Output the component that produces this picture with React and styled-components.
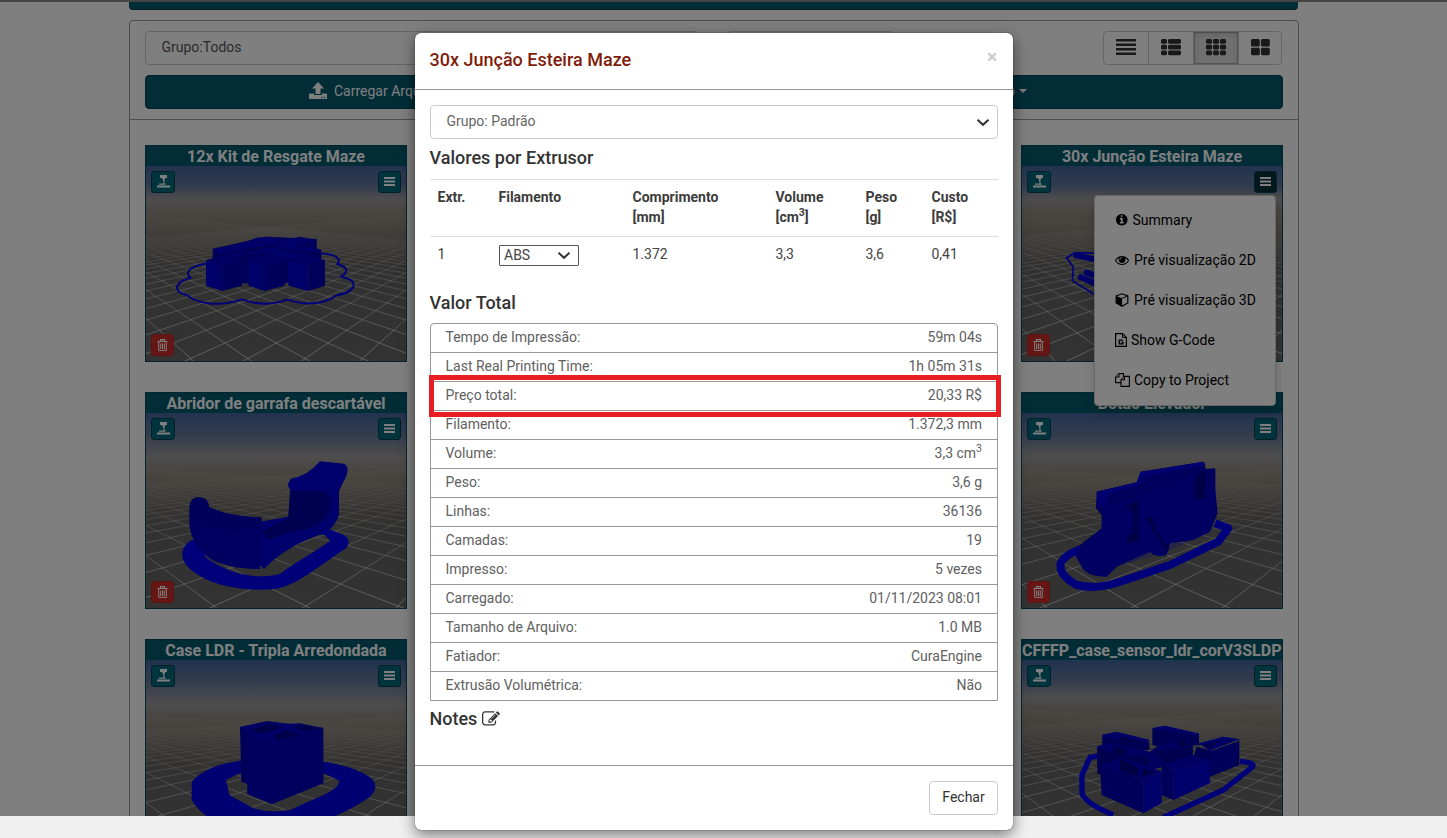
import React from "react";
import styled, { createGlobalStyle, css } from "styled-components";

const Global = createGlobalStyle`
  * { box-sizing: border-box; }
  body { margin: 0; background: #f0f0f0; font: 14px/20px Roboto, "Liberation Sans", sans-serif; color: #333; overflow: hidden; }
  svg { display: block; }
`;

const Screen = styled.div`position: relative; width: 1447px; height: 838px; overflow: hidden;`;
const Page = styled.div`
  height: 816px; overflow: hidden; background: #fff; border-top: 2px solid #888;
`;
const Container = styled.div`width: 1170px; margin: 0 auto 0 129px;`;
const TopBar = styled.div`
  height: 8px; width: 1169px; background: #045a6f; border-radius: 0 0 4px 4px; border-bottom: 1px solid #023c4b;
`;
const Panel = styled.div`
  margin-top: 10px; height: 900px; border: 1px solid #999; border-radius: 4px; background: #fff;
`;
const PanelHead = styled.div`padding: 10px 15px; height: 99px; border-bottom: 1px solid #999;`;
const Filters = styled.div`display: flex; height: 34px;`;
const Field = styled.div`
  width: ${p => p.$w}px; height: 34px; border: 1px solid #ccc; border-radius: 4px; margin-right: ${p => p.$gap}px;
  padding: 5px 15.500px; color: #555; font-size: 14px;
`;
const ViewGroup = styled.div`
  display: flex; width: 179px; border: 1px solid #ccc; border-radius: 4px; overflow: hidden;
`;
const ViewButton = styled.div`
  flex: 0 0 45px; display: flex; align-items: center; justify-content: center; padding-bottom: 1px;
  border-right: 1px solid #ccc;
  &:last-child { flex: 1; border-right: 0; }
  ${p => p.$active && css`background: #e0e0e0; box-shadow: inset 0 3px 5px rgba(0,0,0,.125), inset 0 0 0 1px #adadad;`}
`;
const Toolbar = styled.div`
  display: flex; align-items: center; justify-content: space-between; margin-top: 10px; height: 34px;
  padding: 0 255px 0 163px; background: #045a6f; border: 1px solid #034a5c; border-radius: 4px;
  color: #fff; width: 1138px;
`;
const ToolItem = styled.span`display: flex; align-items: center; gap: 7px; padding-bottom: 2px;`;
const Caret = styled.i`
  border: 4px solid transparent; border-top-color: #fff; border-bottom: 0; margin-left: -3px;
`;
const Cards = styled.div`
  display: grid; grid-template-columns: repeat(4, 262px); gap: 30px; padding: 25px 15px;
`;
const Card = styled.div`
  position: relative; grid-column: ${p => p.$col}; height: 217px; border: 1px solid #034a5c; overflow: hidden;
`;
const CardTitle = styled.div`
  height: 20px; line-height: 22px; background: #045a6f; color: #fff; font-size: 16px; font-weight: 700;
  white-space: nowrap; display: flex; justify-content: ${p => (p.$long ? "flex-start" : "center")};
`;
const Mini = styled.div`
  position: absolute; ${p => p.$side}: 5px; ${p => (p.$bottom ? "bottom: 5px" : "top: 25px")};
  width: ${p => p.$w || 23}px; height: 22px; border-radius: 3px; border: 1px solid ${p => p.$edge || "#034350"};
  background: ${p => p.$bg || "#04687c"}; display: flex; align-items: center; justify-content: center; padding-bottom: 1px;
`;
const Menu = styled.div`
  position: absolute; left: 1094px; top: 195px; width: 182px; height: 211px; padding: 4px 0 6px; background: #fff;
  border: 1px solid #ccc; border-radius: 4px; box-shadow: 0 6px 12px rgba(0,0,0,.18);
`;
const MenuItem = styled.div`
  height: 40px; display: flex; align-items: center; gap: ${p => p.$gap || 4}px; padding-left: 20px; color: #000;
`;
const Backdrop = styled.div`position: absolute; inset: 0 0 22px 0; background: rgba(0,0,0,.5);`;

const Modal = styled.div`
  position: absolute; left: 415px; top: 33px; width: 598px; height: 797px; background: #fff; border-radius: 6px;
  box-shadow: 0 5px 15px rgba(0,0,0,.5), 0 0 1px #000; display: flex; flex-direction: column;
`;
const ModalHead = styled.div`
  height: 57px; padding: 15px 16px 15px 14.500px; border-bottom: 1px solid #999; display: flex; justify-content: space-between;
`;
const Title = styled.div`font-size: 18px; line-height: 24px; font-weight: 500; color: #801c0a;`;
const Close = styled.span`color: #ccc; font-size: 19px; line-height: 18px; font-weight: 700;`;
const Body = styled.div`padding: 15px; height: 675px;`;
const Select = styled.div`
  display: flex; align-items: center; justify-content: space-between; height: 34px; border: 1px solid #ccc;
  border-radius: 4px; padding: 0 7px 2px 15.500px; color: #666;
  svg { margin-top: 3px; }
`;
const Heading = styled.div`
  display: flex; align-items: center; gap: 5px; height: 20px; margin: ${p => p.$m}; font-size: 18px;
  font-weight: 500; color: #333; text-indent: -0.5px;
`;
const Table = styled.div`
  display: grid; grid-template-columns: 61px 134px 143px 90px 66px 74px; border-top: 1px solid #ddd;
`;
const Th = styled.div`height: 57px; padding: 7px 7.500px; font-weight: 700; border-bottom: 1px solid #ddd; font-size: 14px; color: #3c3c3c; sup { line-height: 0; font-size: 75%; }`;
const Td = styled.div`height: 46px; padding: ${p => (p.$control ? "8px" : "7px 7.500px")}; color: #444;`;
const SmallSelect = styled.div`
  display: flex; align-items: center; justify-content: space-between; width: 80px; height: 21px; line-height: 18px;
  border: 1px solid #555; border-radius: 1px; padding: 0 7px 0 4px; color: #444;
  span { height: 20px; }
`;
const List = styled.div`border: 1px solid #999; border-radius: 4px 4px 0 0;`;
const Row = styled.div`
  display: flex; justify-content: space-between; height: 29px; padding: 3px 15px 3px 14.500px; color: #606060;
  border-bottom: 1px solid #999;
  &:last-child { height: 28px; border-bottom: 0; }
  sup { line-height: 0; font-size: 75%; }
`;
const Footer = styled.div`
  border-top: 1px solid #999; padding: 15px; display: flex; justify-content: flex-end;
`;
const Button = styled.div`
  width: 69px; height: 34px; border: 1px solid #ccc; border-radius: 4px; line-height: 31px; text-align: center; color: #333;
`;
const Highlight = styled.div`
  position: absolute; left: 429px; top: 375px; width: 572px; height: 42px; border: 5px solid #e81e25;
`;

const Chevron = ({ w = 14, c = "#333" }) => (
  <svg width={w} height="9" viewBox="0 0 14 9"><path d="M1.5 1.7 7 6.8l5.5-5.1" fill="none" stroke={c} strokeWidth="2" /></svg>
);
const Bars = () => (
  <svg width="11" height="9" fill="#fff"><path d="M0 0h11v2H0zM0 3.500h11v2H0zM0 7h11v2H0z" /></svg>
);
const Printer = () => (
  <svg width="14" height="13" viewBox="0 0 14 13" fill="#fff">
    <path d="M4 0h7v3H9.500L8.500 4.500v2h-1.500v-2L5.500 3H4z" />
    <path d="M7.500 6.500h1v2.500h-1zM3 8.500h6.500v1.200H3zM1 10.500h13v2H1z" />
  </svg>
);
const Trash = () => (
  <svg width="11" height="12" viewBox="0 0 11 12" fill="none" stroke="#fff">
    <path d="M.5 2.500h10M3.500 2.500V.6h4v1.900" strokeWidth="1.200" /><path d="M1.700 3v8.400h7.600V3M3.700 4.500v5.500M5.500 4.500v5.500M7.300 4.500v5.500" />
  </svg>
);
const Upload = () => (
  <svg width="18" height="18" viewBox="0 0 18 18">
    <path fill="#fff" d="M9 0l6 6.500h-3.500V12h-5V6.500H3zM.5 11.500H5V13h8v-1.500h4.500l.5 1V17H0v-4.500z" /><path fill="#045a6f" d="M12.500 14.800h1.200V16h-1.200zM15 14.800h1.200V16H15z" />
  </svg>
);
const FaGlyph = ({ d, w = 14 }) => <svg width={w} height={w} viewBox="0 0 1792 1792" fill="currentColor"><path d={d} /></svg>;
const INFO = "M1152 1376v-160q0-14-9-23t-23-9h-96v-512q0-14-9-23t-23-9h-320q-14 0-23 9t-9 23v160q0 14 9 23t23 9h96v320h-96q-14 0-23 9t-9 23v160q0 14 9 23t23 9h448q14 0 23-9t9-23zm-128-896v-160q0-14-9-23t-23-9h-192q-14 0-23 9t-9 23v160q0 14 9 23t23 9h192q14 0 23-9t9-23zm640 416q0 209-103 385.5t-279.500 279.500-385.500 103-385.500-103-279.500-279.500-103-385.500 103-385.500 279.500-279.500 385.500-103 385.500 103 279.500 279.500 103 385.500z";
const EYE = "M1664 960q-152-236-381-353 61 104 61 225 0 185-131.500 316.500t-316.500 131.500-316.500-131.500-131.500-316.500q0-121 61-225-229 117-381 353 133 205 333.500 326.500t434.500 121.500 434.500-121.500 333.500-326.500zm-720-384q0-20-14-34t-34-14q-125 0-214.500 89.500t-89.500 214.500q0 20 14 34t34 14 34-14 14-34q0-86 61-147t147-61q20 0 34-14t14-34zm848 384q0 34-20 69-140 230-376.500 368.500t-499.500 138.500-499.500-139-376.500-368q-20-35-20-69t20-69q140-229 376.500-368t499.500-139 499.500 139 376.500 368q20 35 20 69z";
const EDIT = "M888 1184l116-116-152-152-116 116v56h96v96h56zm440-720q-16-16-33 1l-350 350q-17 17-1 33t33-1l350-350q17-17 1-33zm80 594v190q0 119-84.500 203.500t-203.500 84.500h-832q-119 0-203.500-84.500t-84.500-203.500v-832q0-119 84.500-203.500t203.500-84.500h832q63 0 117 25 15 7 18 23 3 17-9 29l-49 49q-14 14-32 8-23-6-45-6h-832q-66 0-113 47t-47 113v832q0 66 47 113t113 47h832q66 0 113-47t47-113v-126q0-13 9-22l64-64q15-15 35-7t20 29zm-96-738l288 288-672 672h-288v-288zm444 132l-92 92-288-288 92-92q28-28 68-28t68 28l152 152q28 28 28 68t-28 68z";
const Cube = () => (
  <svg width="14" height="14" viewBox="0 0 14 14"><path d="M7 .8l5.800 2.200v7L7 13.200 1.200 10V3z" fill="none" stroke="#000" strokeWidth="1.200" /><path d="M1.200 3L7 5.300v7.900L1.200 10z" fill="#000" /><path d="M7 5.300L12.800 3" stroke="#000" /></svg>
);
const GFile = () => (
  <svg width="12" height="14" viewBox="0 0 12 14" fill="none" stroke="#000"><path d="M.6.6h6.900l3.900 3.800v9H.6z" strokeWidth="1.200" /><path d="M7.500.6v3.800h3.900" /><path d="M8 7.200H4.200v3.600H8V9.200H6.300" strokeWidth="1.300" /></svg>
);
const Copy = () => (
  <svg width="15" height="14" viewBox="0 0 15 14" fill="#fff" stroke="#000" strokeWidth="1.100"><path d="M4 .6h4.500v9H.6V4z" /><path d="M4 .6V4H.6" /><path d="M9.400 3.400h5v10H6V6.800z" /><path d="M9.400 3.400v3.400H6" /></svg>
);

const cell = (x, y, w, h) => `M${x + 1} ${y}h${w - 2}l1 1v${h - 2}l-1 1h${2 - w}l-1-1v${2 - h}z`;
const VIEW = [
  "M0 0h20v2.500H0zM0 4.500h20v2.500H0zM0 9h20v2.500H0zM0 13.500h20v2.500H0z",
  [0, 5.700, 11.400].map(y => cell(0, y, 6, 4.800) + cell(7, y, 13, 4.800)).join(""),
  [0, 7, 14].flatMap(x => [0, 5.700, 11.400].map(y => cell(x, y, 6, 4.800))).join(""),
  [0, 10].flatMap(x => [0, 8.700].map(y => cell(x, y, 8.800, 7.500))).join(""),
];

/* Perspective floor: two families of lines converging on the horizon. */
function Floor({ id, horizon, base, x0, step }) {
  const d = [];
  for (let k = -24; k <= 24; k++) {
    const x = x0 + k * step;
    [-128, 388].forEach(vx => {
      const t = (200 - horizon) / (base - horizon);
      d.push(`M${vx} ${horizon}L${(vx + (x - vx) * t).toFixed(1)} 200`);
    });
  }
  return (
    <>
      <defs>
        <linearGradient id={`sky${id}`} x2="0" y2="1">
          <stop offset="0" stopColor="#44669f" /><stop offset=".1" stopColor="#62769c" />
          <stop offset={horizon / 195 - 0.02} stopColor="#9c9a9b" /><stop offset={horizon / 195 + 0.06} stopColor="#90887e" />
          <stop offset={horizon / 195 + 0.25} stopColor="#6d6863" /><stop offset={horizon / 195 + 0.33} stopColor="#636363" /><stop offset="1" stopColor="#666" />
        </linearGradient>
        <linearGradient id={`fade${id}`} gradientUnits="userSpaceOnUse" x1="0" x2="0" y1={horizon + 5} y2="195">
          <stop offset="0" stopColor="#fff" stopOpacity="0" /><stop offset=".2" stopColor="#fff" stopOpacity=".12" />
          <stop offset=".45" stopColor="#fff" stopOpacity=".4" /><stop offset="1" stopColor="#fff" stopOpacity=".75" />
        </linearGradient>
      </defs>
      <rect width="260" height="195" fill={`url(#sky${id})`} />
      <path d={d.join("")} stroke={`url(#fade${id})`} strokeWidth=".8" fill="none" />
    </>
  );
}
const A = "#0000f4", B = "#0000b4", C = "#0000d2";
const Block = ({ x, y, l, r, h, u = 16 }) => (
  <>
    <path fill={C} d={`M${x - l} ${y}L${x} ${y + u}V${y + u + h}L${x - l} ${y + h}z`} />
    <path fill={B} d={`M${x} ${y + u}L${x + r} ${y}V${y + h}L${x} ${y + u + h}z`} />
    <path fill="#0000c4" d={`M${x - l} ${y}L${x + (r - l) / 2} ${y - u}L${x + r} ${y}L${x} ${y + u}z`} />
  </>
);
const Hatch = ({ id, d, a = -25 }) => (
  <>
    <pattern id={id} width="9" height="8" patternUnits="userSpaceOnUse" patternTransform={`rotate(${a})`}>
      <path d="M0 2h9" stroke="#0000ee" strokeWidth="3" />
    </pattern>
    <path d={d} fill={`url(#${id})`} opacity=".6" />
  </>
);
const KitModel = () => (
  <g transform="scale(.33333) translate(-18 -78)">
    <path fill="none" stroke={A} strokeWidth="6" d="M230 366C150 375 130 395 152 413C105 425 95 455 140 465C180 495 240 500 305 478C350 494 400 495 442 478C500 500 560 490 590 466C650 455 660 420 604 410C640 385 600 375 592 372C610 350 570 340 530 340" />
    <path fill={B} d="M218 326L380 290L530 297V325L544 330V370H500L440 430L300 430L218 370z" />
    <path fill={C} d="M218 330L300 312L350 293L380 290L430 302L480 290L530 300L460 318L540 328L440 362L370 335L260 356z" />
    <path stroke="#000088" strokeWidth="3" fill="none" d="M218 350L330 328L430 310M315 338L380 318L442 330L540 342M316 345V430M436 350V430" />
    <Block x={246} y={361} l={48} r={60} h={76} /><Block x={375} y={361} l={50} r={58} h={76} /><Block x={505} y={361} l={60} r={50} h={76} />
  </g>
);
const BeltModel = () => (
  <g transform="scale(.33333) translate(-36 -78)" fill="none" stroke={A} strokeWidth="5">
    <path d="M270 340L195 338L170 353L190 382L187 422L260 468" />
    <path d="M198 346L260 359M230 398L265 410M212 412L260 432" strokeWidth="18" strokeLinecap="round" stroke={C} />
  </g>
);
const OpenerModel = () => (
  <g transform="scale(.33333) translate(-18 -84)">
    <path fill={A} fillRule="evenodd" d="M150 468C120 490 115 525 160 560C220 605 320 620 405 612C470 600 520 555 620 488Q635 465 612 450L560 430L330 410zM186 495L200 520Q270 568 345 574Q390 575 420 566C470 530 510 510 570 468L555 450L360 420L186 480z" />
    <path fill="#0000d8" d="M360 410L445 395L452 315Q435 300 455 280Q500 275 540 229L612 236Q630 245 618 275L597 318V390Q580 440 530 452Q430 490 372 552L360 540z" />
    <path fill="#0000a2" d="M450 316L550 318Q585 330 565 385Q540 435 450 440L385 465L365 440L445 400z" />
    <path fill="#0000b5" d="M148 365Q150 335 180 336Q205 338 208 366Q270 395 365 397L360 552Q230 550 185 500Q155 470 148 420z" />
    <Hatch id="openerHatch" d="M150 400Q250 460 362 420L360 552Q230 550 185 500Q155 470 150 400z" a={10} />
  </g>
);
const ButtonModel = () => (
  <g transform="scale(.33333) translate(-36 -84)">
    <path fill="none" stroke={A} strokeWidth="24" strokeLinejoin="round" d="M240 485Q170 500 152 535Q145 570 200 600Q260 615 330 590L480 540L625 470L655 430L615 415" />
    <path fill="#0000b8" d="M260 320L380 292L392 260L580 230L588 252L616 250V315L623 385L600 440L550 465L480 475L470 510Q440 520 420 500L320 545L290 575Q230 575 215 545L198 515L210 480L275 430V390L258 370z" />
    <Hatch id="buttonHatch" d="M275 370L560 270L620 315L600 440L470 500L320 545L290 575Q230 575 200 515L275 430z" />
    <path fill="#0000dc" d="M260 320L380 292L392 260L580 230L588 240L400 275L390 300L300 325L285 365L262 360z" />
    <path fill="#00008e" d="M345 365L385 345V470L350 475L355 450L370 440V380zM405 395L430 400L440 440L478 490L470 500L425 430zM555 280L585 255V340L555 345z" />
  </g>
);
const CaseModel = () => (
  <g transform="scale(.33333) translate(-18 -90)">
    <path fill="#0000e6" fillRule="evenodd" d="M300 392Q200 405 155 455V510Q180 550 220 570H560Q650 530 690 500Q730 460 670 430Q620 405 550 395zM258 450L300 430H550L595 450Q605 470 550 495L450 540Q390 550 340 535L268 495z" />
    <path fill="#0000b0" d="M300 291L382 274L550 293V460L395 523L322 492V462L304 455z" />
    <path fill="#0000cc" d="M300 291L382 274L440 282L480 280L550 295L480 312L395 340L323 310z" />
    <path fill="#000092" d="M330 302L385 282L430 292L370 310zM400 318L440 300L475 313L410 332zM455 290L500 285L540 296L490 305z" />
    <Hatch id="caseHatch" d="M322 315L395 340L550 296V460L395 523L322 492z" a={-65} />
  </g>
);
const SensorModel = () => (
  <g transform="scale(.33333) translate(-36 -90)">
    <path fill="none" stroke={A} strokeWidth="16" d="M268 378L240 382L216 435V490Q225 520 310 555M460 562L640 480L728 410Q735 398 690 394" />
    {/* rear blocks: top face, front face, side face and dark recess of each */}
    <path fill="#0000c8" d="M277 315L320 306L418 330L405 345L277 335zM427 295L465 288L567 312V325L500 335zM565 340L640 320L688 328L600 362z" />
    <path fill="#0000a4" d="M277 325L418 335V360H277zM427 297L567 318V345L460 355L427 345zM560 350L605 362L688 332V405L600 440L545 400z" />
    <path fill="#0000c0" d="M262 348L310 340L420 365L440 350L500 330L548 345V390L420 420L262 400z" />
    <path fill="#00009c" d="M262 355L350 380L420 375V430L262 432zM430 362L548 350V385L470 410z" />
    <path fill="#0000c4" d="M270 410L335 385L455 425L400 448zM455 405L550 375L600 390L490 420z" />
    <path fill={B} d="M270 410L400 448V550L275 495zM455 405L490 420V510L455 495z" />
    <path fill="#0000d0" d="M400 448L455 425V520L400 550zM490 420L600 390V460L490 510z" />
    <path fill="#000088" d="M330 385L385 415L385 440L330 420zM395 440L440 425L400 418zM310 350L345 356L350 372L312 372zM500 330L545 345L505 350zM580 345L625 332L600 355zM330 320L400 335L330 332z" />
    <path fill="none" stroke="#0000e8" strokeWidth="3" d="M277 316L320 307L418 331M427 296L465 289L567 312M565 345L640 322L688 330M262 350L305 342M270 411L335 386L455 426" />
    <Hatch id="sensorHatch" d="M400 448L455 425V520L400 550zM490 420L600 390V460L490 510zM605 365L685 335V405L600 440z" a={-60} />
  </g>
);

const CARDS = [
  { t: "12x Kit de Resgate Maze", M: KitModel, f: [37, 177, 79, 51.500], trash: true },
  { t: "30x Junção Esteira Maze", M: BeltModel, f: [37, 181, 19, 56], trash: true, open: true },
  { t: "Abridor de garrafa descartável", M: OpenerModel, f: [48, 193, 68, 92], trash: true },
  { t: "Botão Elevador", M: ButtonModel, f: [48, 193, 113, 90], trash: true },
  { t: "Case LDR - Tripla Arredondada", M: CaseModel, f: [48, 193, 68, 92] },
  { t: "CFFFP_case_sensor_ldr_corV3SLDPRT", M: SensorModel, f: [40, 177, 60, 72], long: true },
];
const ROWS = [
  ["Tempo de Impressão:", "59m 04s"], ["Last Real Printing Time:", "1h 05m 31s"], ["Preço total:", "20,33 R$"],
  ["Filamento:", "1.372,3 mm"], ["Volume:", <span key="v">3,3 cm<sup>3</sup></span>], ["Peso:", "3,6 g"], ["Linhas:", "36136"],
  ["Camadas:", "19"], ["Impresso:", "5 vezes"], ["Carregado:", "01/11/2023 08:01"], ["Tamanho de Arquivo:", "1.0 MB"],
  ["Fatiador:", "CuraEngine"], ["Extrusão Volumétrica:", "Não"],
];

export default function App() {
  return (
    <Screen>
      <Global />
      <Page>
        <Container>
          <TopBar />
          <Panel>
            <PanelHead>
              <Filters>
                <Field $w={553} $gap={29}>Grupo:Todos</Field>
                <Field $w={166} $gap={210} />
                <ViewGroup>
                  {VIEW.map((d, i) => (
                    <ViewButton key={i} $active={i === 2}>
                      <svg width={i === 3 ? 19 : 20} height="17" fill="#333"><path d={d} /></svg>
                    </ViewButton>
                  ))}
                </ViewGroup>
              </Filters>
              <Toolbar>
                <ToolItem><Upload />Carregar Arquivo</ToolItem>
                <ToolItem>Novo<Caret /></ToolItem>
              </Toolbar>
            </PanelHead>
            <Cards>
              {CARDS.map(({ t, M, f, trash, open, long }, i) => (
                <Card key={t} $col={i % 2 ? 4 : 1}>
                  <CardTitle $long={long}>{t}</CardTitle>
                  <svg width="260" height="195" viewBox="0 0 260 195">
                    <Floor id={i} horizon={f[0]} base={f[1]} x0={f[2]} step={f[3]} />
                    <M />
                  </svg>
                  <Mini $side="left" $w={24}><Printer /></Mini>
                  <Mini $side="right" $bg={open ? "#02303a" : undefined}><Bars /></Mini>
                  {trash && <Mini $side="left" $bottom $bg="#cc2f2b" $edge="#b52b27"><Trash /></Mini>}
                </Card>
              ))}
            </Cards>
          </Panel>
        </Container>
      </Page>
      <Menu>
        <MenuItem><FaGlyph d={INFO} w={13.500} />Summary</MenuItem>
        <MenuItem $gap={5}><FaGlyph d={EYE} />Pré visualização 2D</MenuItem>
        <MenuItem $gap={5}><Cube />Pré visualização 3D</MenuItem>
        <MenuItem><GFile />Show G-Code</MenuItem>
        <MenuItem><Copy />Copy to Project</MenuItem>
      </Menu>
      <Backdrop />
      <Modal>
        <ModalHead><Title>30x Junção Esteira Maze</Title><Close>×</Close></ModalHead>
        <Body>
          <Select>Grupo: Padrão<Chevron /></Select>
          <Heading $m="9px 0 11px">Valores por Extrusor</Heading>
          <Table>
            <Th>Extr.</Th><Th>Filamento</Th><Th>Comprimento<br />[mm]</Th><Th>Volume<br />[cm<sup>3</sup>]</Th><Th>Peso<br />[g]</Th><Th>Custo<br />[R$]</Th>
            <Td>1</Td><Td $control><SmallSelect><span>ABS</span><Chevron /></SmallSelect></Td><Td>1.372</Td><Td>3,3</Td><Td>3,6</Td><Td>0,41</Td>
          </Table>
          <Heading $m="10px 0 10px">Valor Total</Heading>
          <List>{ROWS.map(([a, b]) => <Row key={a}><span>{a}</span><span>{b}</span></Row>)}</List>
          <Heading $m="8px 0 0">Notes <FaGlyph d={EDIT} w={18} /></Heading>
        </Body>
        <Footer><Button>Fechar</Button></Footer>
      </Modal>
      <Highlight />
    </Screen>
  );
}
